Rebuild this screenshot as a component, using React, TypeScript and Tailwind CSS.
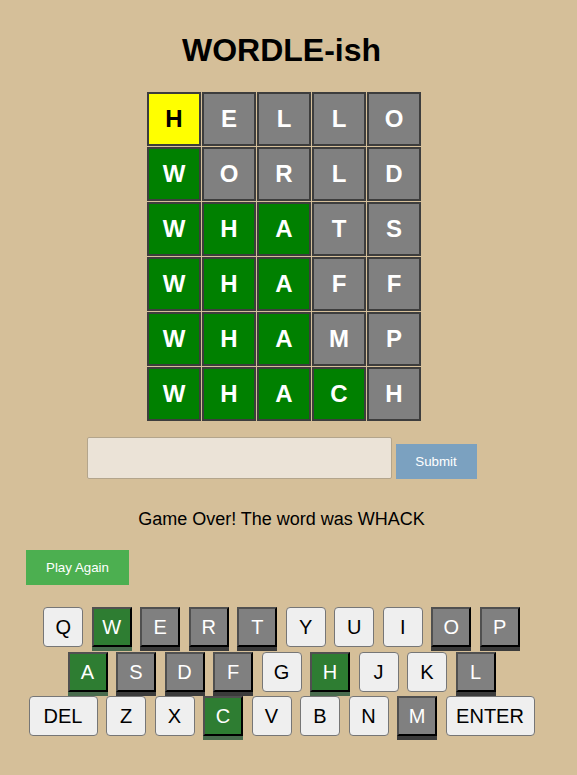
import { useState } from 'react';

type TileState = 'correct' | 'present' | 'absent';

const guesses: { word: string; states: TileState[] }[] = [
  { word: 'HELLO', states: ['present', 'absent', 'absent', 'absent', 'absent'] },
  { word: 'WORLD', states: ['correct', 'absent', 'absent', 'absent', 'absent'] },
  { word: 'WHATS', states: ['correct', 'correct', 'correct', 'absent', 'absent'] },
  { word: 'WHAFF', states: ['correct', 'correct', 'correct', 'absent', 'absent'] },
  { word: 'WHAMP', states: ['correct', 'correct', 'correct', 'absent', 'absent'] },
  { word: 'WHACH', states: ['correct', 'correct', 'correct', 'correct', 'absent'] },
];

const rows = ['QWERTYUIOP', 'ASDFGHJKL', 'ZXCVBNM'];

const keyStates: Record<string, 'correct' | 'absent'> = {
  W: 'correct',
  A: 'correct',
  H: 'correct',
  C: 'correct',
  E: 'absent',
  R: 'absent',
  T: 'absent',
  O: 'absent',
  P: 'absent',
  S: 'absent',
  D: 'absent',
  F: 'absent',
  L: 'absent',
  M: 'absent',
};

function Tile({ letter, state }: { letter: string; state: TileState }) {
  const color =
    state === 'correct'
      ? 'bg-[#008000] text-white'
      : state === 'present'
        ? 'bg-[#ffff00] text-black'
        : 'bg-[#808080] text-white';
  return (
    <div
      className={`w-[54px] h-[54px] border-2 border-[#3d3d3d] flex items-center justify-center text-[24px] font-bold ${color}`}
    >
      {letter}
    </div>
  );
}

function Key({ label, wide }: { label: string; wide?: string }) {
  const state = keyStates[label];
  const width = wide ?? 'w-10';
  if (state === 'correct') {
    return (
      <button
        type="button"
        className={`${width} h-10 text-[20px] text-white bg-[#2e7d32] border-2 border-t-[#505050] border-l-[#505050] border-r-black border-b-black shadow-[0_4px_0_#486b4d]`}
      >
        {label}
      </button>
    );
  }
  if (state === 'absent') {
    return (
      <button
        type="button"
        className={`${width} h-10 text-[20px] text-white bg-[#808080] border-2 border-t-[#505050] border-l-[#505050] border-r-black border-b-black shadow-[0_4px_0_#3b3b3b]`}
      >
        {label}
      </button>
    );
  }
  return (
    <button
      type="button"
      className={`${width} h-10 text-[20px] text-black bg-[#efefef] border border-[#767676] rounded-[4px]`}
    >
      {label}
    </button>
  );
}

export default function App() {
  const [guess, setGuess] = useState('');

  return (
    <div className="min-h-screen bg-[#d5bf99] font-['Liberation_Sans',Arial,sans-serif] text-black pr-[14px] pb-8">
      <div className="flex flex-col items-center pt-[32px]">
        <h1 className="text-[32px] leading-[36px] font-bold">WORDLE-ish</h1>

        {/* Board */}
        <div className="mt-[24px] ml-[5px] grid grid-cols-5 gap-[1px]">
          {guesses.map((g) =>
            g.word.split('').map((ch, i) => (
              <Tile key={`${g.word}-${i}`} letter={ch} state={g.states[i]} />
            )),
          )}
        </div>

        {/* Guess input */}
        <div className="mt-4 flex items-end gap-[4px]">
          <input
            value={guess}
            onChange={(e) => setGuess(e.target.value)}
            className="w-[305px] h-[42px] bg-[#ebe3d7] border border-[#b3a58c] rounded-[2px] px-2 text-[16px] outline-none"
          />
          <button
            type="button"
            className="w-[81px] h-[35px] bg-[#7ba1c0] text-white text-[13.33px]"
          >
            Submit
          </button>
        </div>

        <p className="mt-[30px] text-[18px] leading-[21px]">
          Game Over! The word was WHACK
        </p>

        <button
          type="button"
          className="self-start ml-[26px] mt-[20px] w-[103px] h-[35px] bg-[#4caf50] text-white text-[13.33px]"
        >
          Play Again
        </button>

        {/* Keyboard */}
        <div className="mt-[22px] flex flex-col items-center gap-[4.5px]">
          <div className="flex gap-[8.5px]">
            {rows[0].split('').map((k) => (
              <Key key={k} label={k} />
            ))}
          </div>
          <div className="flex gap-[8.5px]">
            {rows[1].split('').map((k) => (
              <Key key={k} label={k} />
            ))}
          </div>
          <div className="flex gap-[8.5px]">
            <Key label="DEL" wide="w-[69px]" />
            {rows[2].split('').map((k) => (
              <Key key={k} label={k} />
            ))}
            <Key label="ENTER" wide="w-[89px]" />
          </div>
        </div>
      </div>
    </div>
  );
}
